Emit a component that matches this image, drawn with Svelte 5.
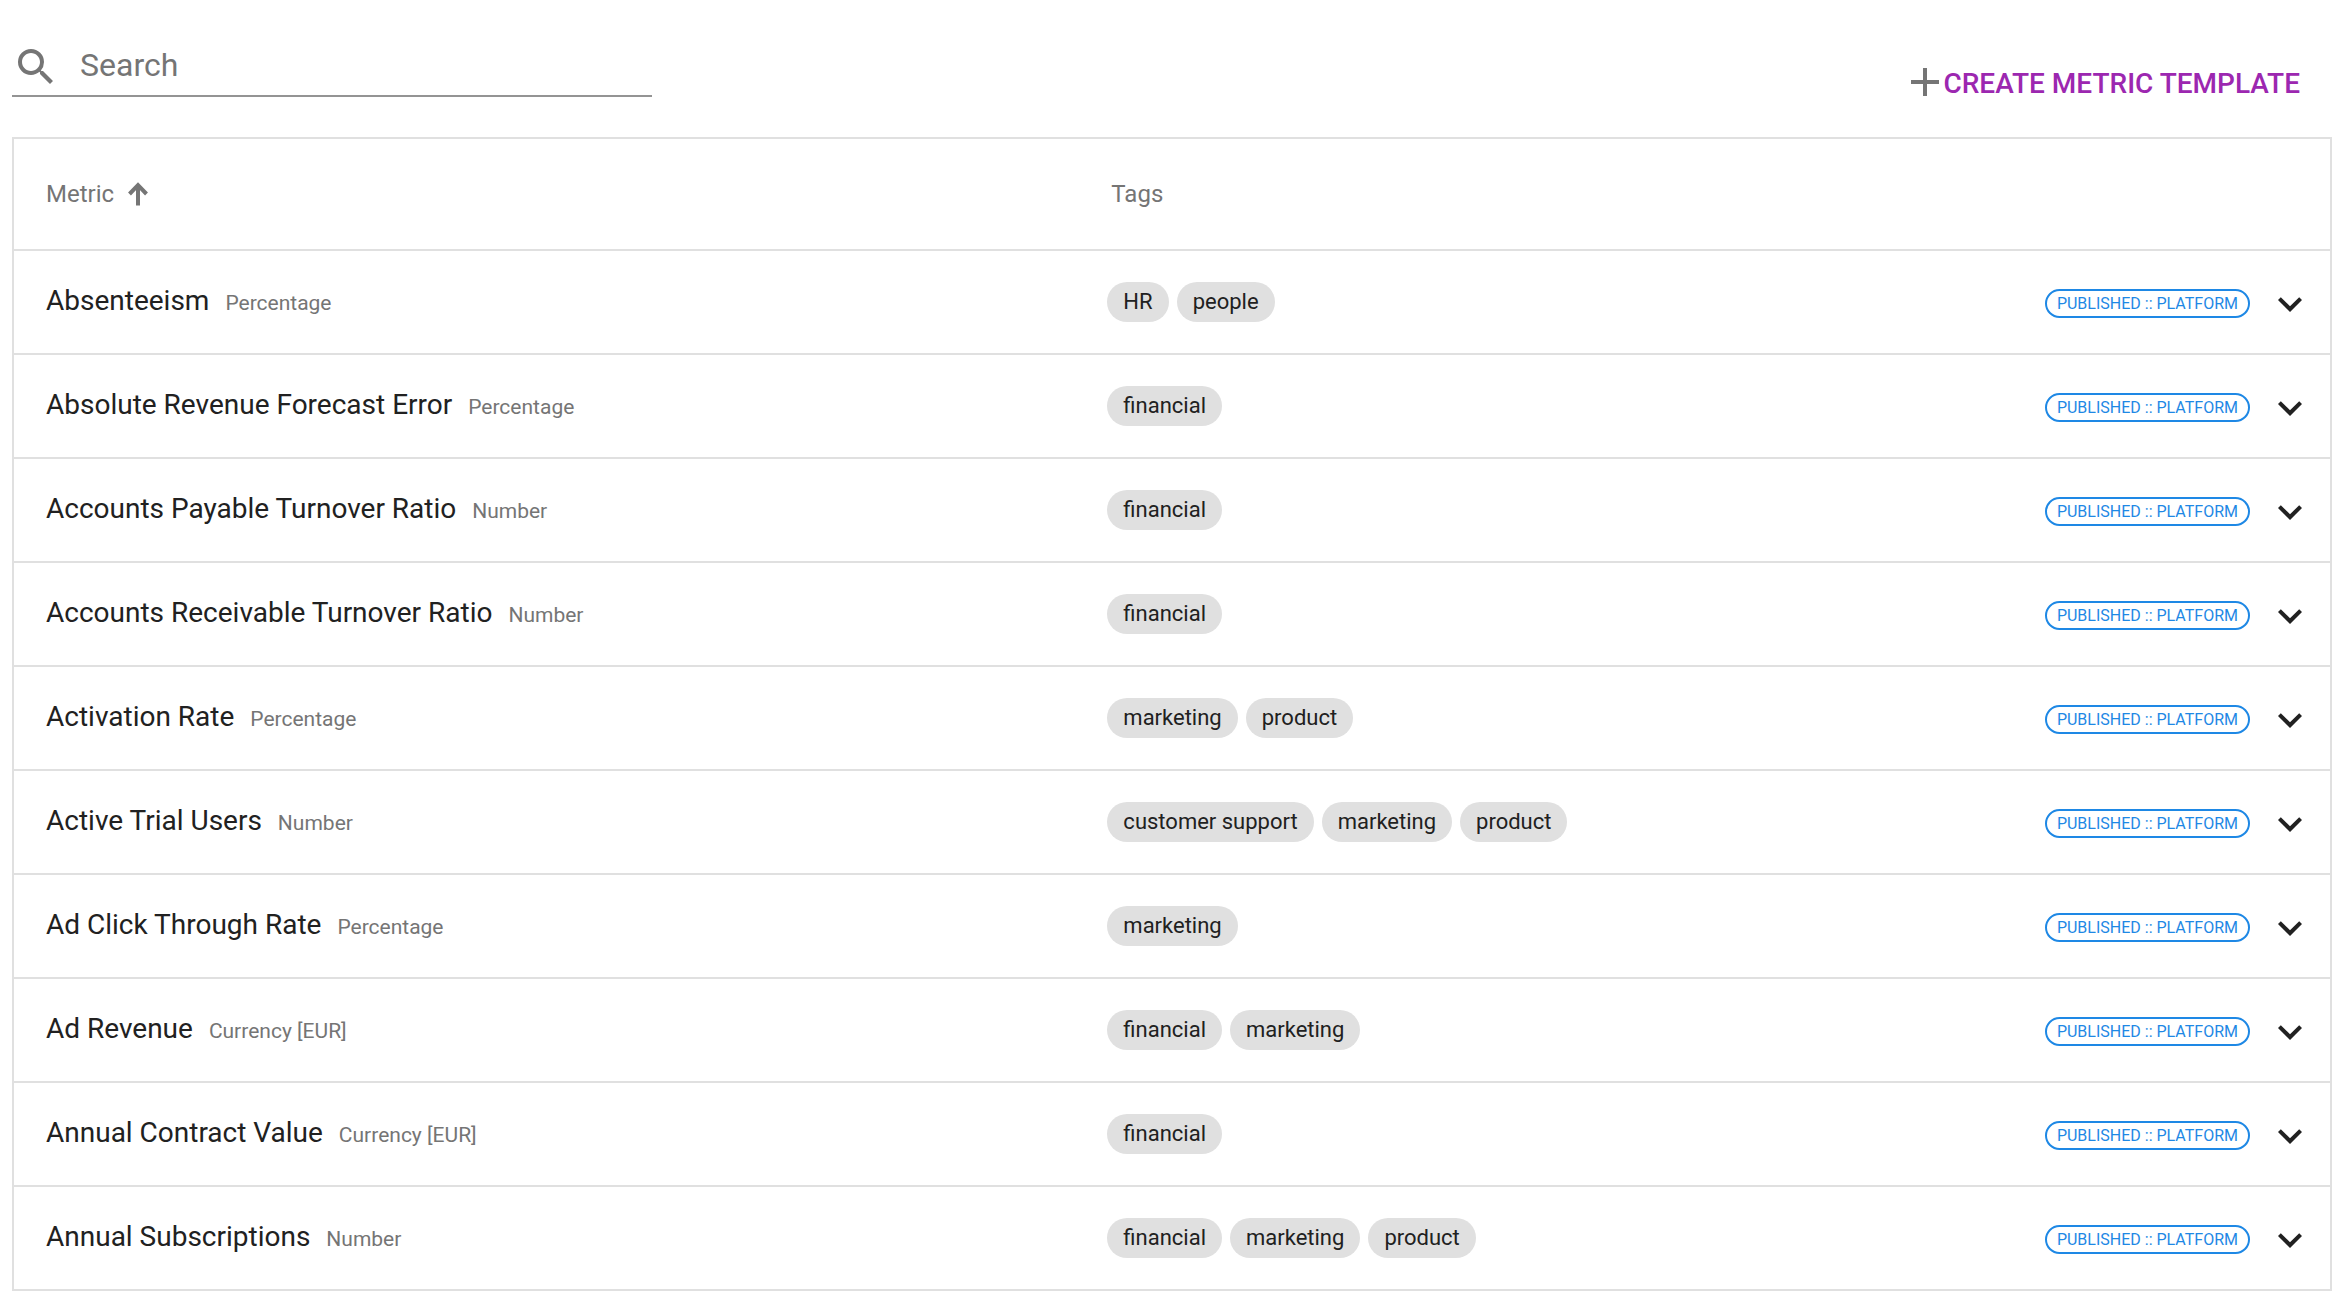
<script>
  let search = $state('');
  let ascending = $state(true);

  const metrics = [
    { name: 'Absenteeism', unit: 'Percentage', tags: ['HR', 'people'] },
    { name: 'Absolute Revenue Forecast Error', unit: 'Percentage', tags: ['financial'] },
    { name: 'Accounts Payable Turnover Ratio', unit: 'Number', tags: ['financial'] },
    { name: 'Accounts Receivable Turnover Ratio', unit: 'Number', tags: ['financial'] },
    { name: 'Activation Rate', unit: 'Percentage', tags: ['marketing', 'product'] },
    { name: 'Active Trial Users', unit: 'Number', tags: ['customer support', 'marketing', 'product'] },
    { name: 'Ad Click Through Rate', unit: 'Percentage', tags: ['marketing'] },
    { name: 'Ad Revenue', unit: 'Currency [EUR]', tags: ['financial', 'marketing'] },
    { name: 'Annual Contract Value', unit: 'Currency [EUR]', tags: ['financial'] },
    { name: 'Annual Subscriptions', unit: 'Number', tags: ['financial', 'marketing', 'product'] }
  ];

  let rows = $derived.by(() => {
    const query = search.trim().toLowerCase();
    const found = metrics.filter((m) => m.name.toLowerCase().includes(query));
    return ascending ? found : found.reverse();
  });
</script>

<main class="page">
  <div class="toolbar">
    <label class="search">
      <svg class="search-icon" viewBox="0 0 24 24" fill="currentColor" aria-hidden="true"><path d="M15.5 14h-.79l-.28-.27A6.471 6.471 0 0 0 16 9.5 6.5 6.5 0 1 0 9.5 16c1.61 0 3.09-.59 4.23-1.57l.27.28v.79l5 4.99L20.49 19l-4.99-5zm-6 0C7.01 14 5 11.99 5 9.5S7.01 5 9.5 5 14 7.01 14 9.5 11.99 14 9.5 14z"/></svg>
      <input type="text" placeholder="Search" aria-label="Search" bind:value={search} />
    </label>
    <button class="create-btn">
      <svg viewBox="0 0 14 14" fill="currentColor" aria-hidden="true"><path d="M14 8H8v6H6V8H0V6h6V0h2v6h6z"/></svg>
      CREATE METRIC TEMPLATE
    </button>
  </div>

  <table>
    <thead>
      <tr>
        <th class="col-metric">
          <button class="sort-btn" onclick={() => (ascending = !ascending)}>
            Metric
            <svg class:flipped={!ascending} viewBox="0 0 20 24" fill="none" stroke="currentColor" stroke-width="4" aria-hidden="true"><path d="M10 23.500V3M1.500 12L10 3.200L18.500 12"/></svg>
          </button>
        </th>
        <th class="col-tags">Tags</th>
        <th class="col-status"></th>
      </tr>
    </thead>
    <tbody>
      {#each rows as metric (metric.name)}
        <tr>
          <td class="col-metric">
            <span class="name">{metric.name}</span>
            <span class="unit">{metric.unit}</span>
          </td>
          <td class="col-tags">
            <div class="tags">
              {#each metric.tags as tag}
                <span class="tag">{tag}</span>
              {/each}
            </div>
          </td>
          <td class="col-status">
            <div class="status">
              <span class="badge">PUBLISHED :: PLATFORM</span>
              <button class="expand-btn" aria-label="Expand {metric.name}">
                <svg viewBox="0 0 24 24" fill="currentColor" aria-hidden="true"><path d="M16.590 8.590L12 13.170 7.410 8.590 6 10l6 6 6-6z"/></svg>
              </button>
            </div>
          </td>
        </tr>
      {/each}
    </tbody>
  </table>
</main>

<style>
  :global(body) {
    margin: 0;
    background: #ffffff;
  }

  .page {
    padding: 34px 8px 16px 12px;
    font-family: Roboto, sans-serif;
    color: #212121;
  }

  button {
    padding: 0;
    border: none;
    background: none;
    font-family: inherit;
    cursor: pointer;
  }

  .toolbar {
    display: flex;
    align-items: flex-start;
    justify-content: space-between;
    margin-bottom: 35px;
  }

  .search {
    display: flex;
    align-items: center;
    gap: 20px;
    box-sizing: border-box;
    width: 640px;
    height: 63px;
    border-bottom: 2px solid #949494;
    color: #757575;
  }

  .search-icon {
    width: 48px;
    height: 48px;
    margin-top: 4px;
    flex-shrink: 0;
  }

  .search input {
    flex: 1;
    min-width: 0;
    padding: 0;
    border: none;
    outline: none;
    background: none;
    font-family: inherit;
    font-size: 32px;
    line-height: 40px;
    color: #212121;
  }

  .search input::placeholder {
    color: #757575;
    opacity: 1;
  }

  .create-btn {
    display: flex;
    align-items: center;
    gap: 4px;
    margin: 32px 32px 0 0;
    font-size: 28px;
    line-height: 36px;
    font-weight: 500;
    color: #9c27b0;
  }

  .create-btn svg {
    width: 28px;
    height: 28px;
    margin-bottom: 4px;
    color: #757575;
  }

  table {
    width: 100%;
    border: 2px solid #e0e0e0;
    border-collapse: separate;
    border-spacing: 0;
    table-layout: fixed;
  }

  th,
  td {
    box-sizing: border-box;
    padding: 0 32px;
  }

  th {
    height: 110px;
    font-size: 24px;
    font-weight: 400;
    text-align: left;
    color: #757575;
  }

  td {
    height: 104px;
    border-top: 2px solid #e0e0e0;
  }

  .col-metric {
    width: 46%;
  }

  .col-status {
    width: 20%;
    padding-right: 16px;
  }

  td.col-metric {
    padding-bottom: 2px;
  }

  td.col-status {
    padding-top: 3px;
  }

  .sort-btn {
    display: flex;
    align-items: center;
    gap: 14px;
    font-size: 24px;
    line-height: 32px;
    color: #757575;
  }

  .sort-btn svg {
    width: 20px;
    height: 24px;
  }

  .flipped {
    transform: rotate(180deg);
  }

  .name {
    margin-right: 12px;
    font-size: 28px;
    line-height: 36px;
  }

  .unit {
    font-size: 21px;
    color: #757575;
  }

  .tags {
    display: flex;
    gap: 8px;
    margin-left: -4px;
  }

  .tag {
    padding: 0 16px;
    border-radius: 20px;
    background: #e0e0e0;
    font-size: 22px;
    line-height: 40px;
  }

  .status {
    display: flex;
    align-items: center;
    justify-content: flex-end;
    gap: 16px;
  }

  .badge {
    padding: 0 10px;
    border: 2px solid #1e88e5;
    border-radius: 16px;
    font-size: 16px;
    line-height: 25px;
    color: #1e88e5;
  }

  .expand-btn {
    color: #212121;
  }

  .expand-btn svg {
    display: block;
    width: 48px;
    height: 48px;
  }
</style>
